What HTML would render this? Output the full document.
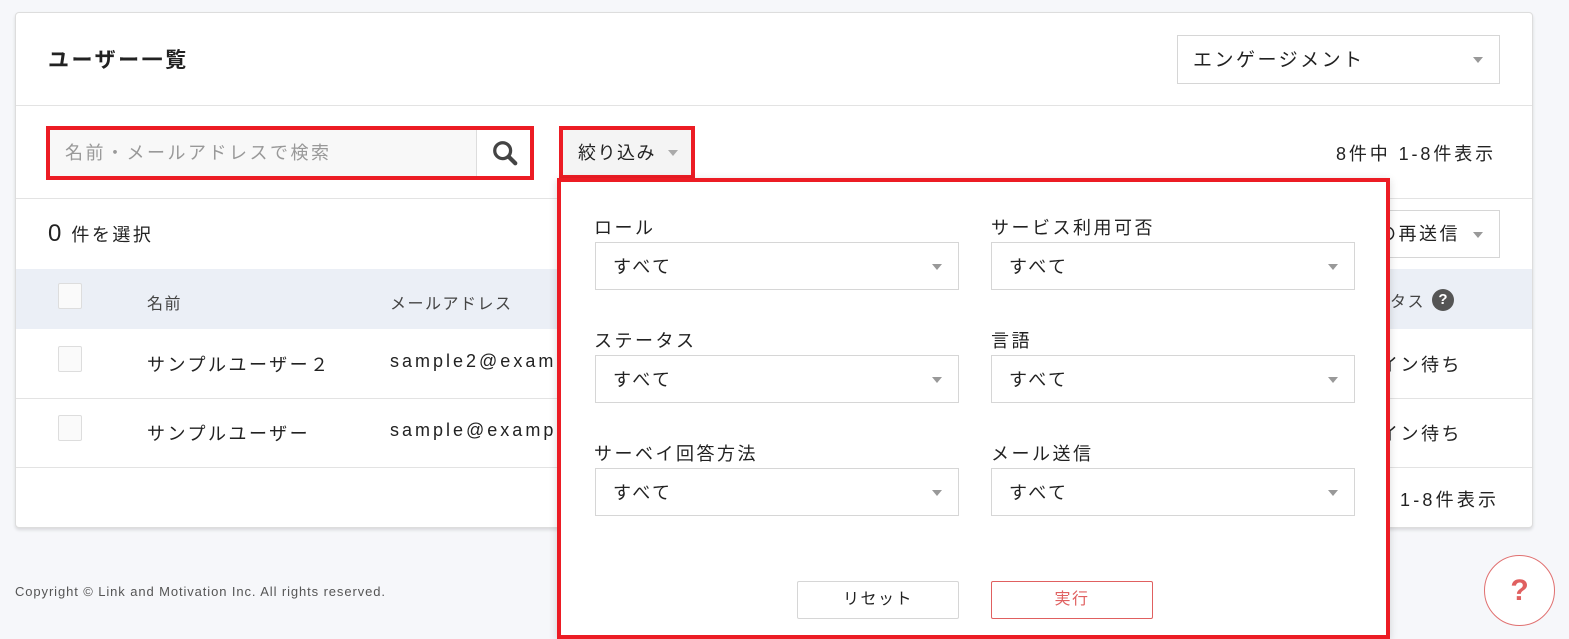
<!DOCTYPE html>
<html><head><meta charset="utf-8"><style>
*{box-sizing:border-box;margin:0;padding:0}
body{width:1569px;height:639px;background:#f6f7fa;position:relative;overflow:hidden;font-family:"Liberation Sans","Noto Sans CJK JP",sans-serif;color:#222}
.a{position:absolute}
.card{left:15px;top:12px;width:1518px;height:516px;background:#fff;border:1px solid #ddd;border-radius:4px;box-shadow:0 2px 3px rgba(0,0,0,.12)}
.hl{height:1px;background:#e3e3e3;left:16px;width:1516px}
.sel{border:1px solid #d6d6d6;background:#fff}
.tri{width:0;height:0;border-left:5px solid transparent;border-right:5px solid transparent;border-top:6px solid #999}
.red{border:4px solid #ec1c24}
.t{font-size:18px;white-space:nowrap;letter-spacing:2.5px}
.cb{width:24px;height:26px;border:1px solid #ddd;border-radius:2px;background:#fafafa}
</style></head><body>
<div class="a card"></div>
<div class="a t" style="left:48px;top:44px;font-size:21px;font-weight:bold">ユーザー一覧</div>
<div class="a sel" style="left:1177px;top:35px;width:323px;height:49px"></div>
<div class="a t" style="left:1193px;top:45px;font-size:19px">エンゲージメント</div>
<div class="a tri" style="left:1473px;top:57px"></div>
<div class="a hl" style="top:105px"></div>
<div class="a hl" style="top:198px"></div>
<div class="a red" style="left:46px;top:126px;width:488px;height:54px"></div>
<div class="a" style="left:50px;top:130px;width:426px;height:46px;background:#f8f8f8"></div>
<div class="a" style="left:476px;top:130px;width:1px;height:46px;background:#ddd"></div>
<div class="a t" style="left:65px;top:139px;color:#999">名前・メールアドレスで検索</div>
<svg class="a" style="left:491px;top:139px" width="28" height="28" viewBox="0 0 30 30"><circle cx="12.5" cy="12.5" r="8.5" fill="none" stroke="#444" stroke-width="3.5"/><path d="M19 19l7 7" stroke="#444" stroke-width="4.5" stroke-linecap="round"/></svg>
<div class="a red" style="left:559px;top:126px;width:136px;height:53px"></div>
<div class="a" style="left:563px;top:130px;width:128px;height:45px;background:#f4f4f4"></div>
<div class="a t" style="left:578px;top:139px;letter-spacing:1.5px">絞り込み</div>
<div class="a tri" style="left:668px;top:150px;border-top-color:#aaa"></div>
<div class="a t" style="left:1336px;top:140px;letter-spacing:2.9px">8件中 1-8件表示</div>
<div class="a t" style="left:48px;top:220px"><span style="font-size:24px">0</span> 件を選択</div>
<div class="a sel" style="left:1330px;top:210px;width:170px;height:48px"></div>
<div class="a t" style="left:1378px;top:220px">の再送信</div>
<div class="a tri" style="left:1473px;top:232px"></div>
<div class="a" style="left:16px;top:269px;width:1516px;height:60px;background:#ebeff6"></div>
<div class="a cb" style="left:58px;top:283px"></div>
<div class="a t" style="left:147px;top:290px;font-size:16px;color:#444;letter-spacing:1.5px">名前</div>
<div class="a t" style="left:390px;top:290px;font-size:16px;color:#444;letter-spacing:1.5px">メールアドレス</div>
<div class="a t" style="left:1390px;top:288px;font-size:16px;color:#444;letter-spacing:1.5px">タス</div>
<div class="a" style="left:1432px;top:289px;width:22px;height:22px;border-radius:50%;background:#555;color:#fff;font-size:15px;font-weight:bold;text-align:center;line-height:22px">?</div>
<div class="a cb" style="left:58px;top:346px"></div>
<div class="a t" style="left:147px;top:351px">サンプルユーザー２</div>
<div class="a t" style="left:390px;top:351px;letter-spacing:3px">sample2@example.com</div>
<div class="a t" style="left:1380px;top:351px">イン待ち</div>
<div class="a hl" style="top:398px"></div>
<div class="a cb" style="left:58px;top:415px"></div>
<div class="a t" style="left:147px;top:420px">サンプルユーザー</div>
<div class="a t" style="left:390px;top:420px;letter-spacing:3px">sample@example.com</div>
<div class="a t" style="left:1380px;top:420px">イン待ち</div>
<div class="a hl" style="top:467px"></div>
<div class="a t" style="left:1400px;top:486px;letter-spacing:3.2px">1-8件表示</div>
<div class="a" style="left:15px;top:584px;font-size:13px;color:#555;letter-spacing:0.9px">Copyright © Link and Motivation Inc. All rights reserved.</div>
<div class="a" style="left:1484px;top:555px;width:71px;height:71px;border-radius:50%;border:1px solid #e07070;background:#fff;color:#e06060;font-size:30px;font-weight:bold;text-align:center;line-height:69px">?</div>
<div class="a red" style="left:557px;top:178px;width:833px;height:461px;background:#fff;box-shadow:0 2px 8px rgba(0,0,0,.15)"></div>
<div class="a t" style="left:594px;top:214px">ロール</div>
<div class="a t" style="left:991px;top:214px">サービス利用可否</div>
<div class="a t" style="left:594px;top:327px">ステータス</div>
<div class="a t" style="left:991px;top:327px">言語</div>
<div class="a t" style="left:594px;top:440px">サーベイ回答方法</div>
<div class="a t" style="left:991px;top:440px">メール送信</div>
<div class="a sel" style="left:595px;top:242px;width:364px;height:48px"></div><div class="a t" style="left:613px;top:253px">すべて</div><div class="a tri" style="left:932px;top:264px"></div>
<div class="a sel" style="left:991px;top:242px;width:364px;height:48px"></div><div class="a t" style="left:1009px;top:253px">すべて</div><div class="a tri" style="left:1328px;top:264px"></div>
<div class="a sel" style="left:595px;top:355px;width:364px;height:48px"></div><div class="a t" style="left:613px;top:366px">すべて</div><div class="a tri" style="left:932px;top:377px"></div>
<div class="a sel" style="left:991px;top:355px;width:364px;height:48px"></div><div class="a t" style="left:1009px;top:366px">すべて</div><div class="a tri" style="left:1328px;top:377px"></div>
<div class="a sel" style="left:595px;top:468px;width:364px;height:48px"></div><div class="a t" style="left:613px;top:479px">すべて</div><div class="a tri" style="left:932px;top:490px"></div>
<div class="a sel" style="left:991px;top:468px;width:364px;height:48px"></div><div class="a t" style="left:1009px;top:479px">すべて</div><div class="a tri" style="left:1328px;top:490px"></div>
<div class="a" style="left:797px;top:581px;width:162px;height:38px;border:1px solid #d6d6d6;border-radius:2px;text-align:center;line-height:36px;font-size:16px;letter-spacing:1.5px">リセット</div>
<div class="a" style="left:991px;top:581px;width:162px;height:38px;border:1px solid #e06060;border-radius:2px;text-align:center;line-height:36px;font-size:16px;color:#e06060;letter-spacing:1.5px">実行</div>
</body></html>
